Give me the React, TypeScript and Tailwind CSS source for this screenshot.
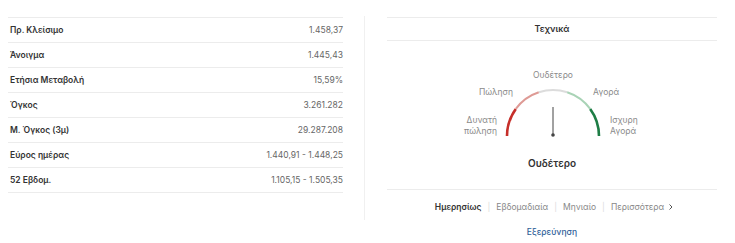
import React from 'react';

const rows: [string, string][] = [
  ['Πρ. Κλείσιμο', '1.458,37'],
  ['Άνοιγμα', '1.445,43'],
  ['Ετήσια Μεταβολή', '15,59%'],
  ['Όγκος', '3.261.282'],
  ['Μ. Όγκος (3μ)', '29.287.208'],
  ['Εύρος ημέρας', '1.440,91 - 1.448,25'],
  ['52 Εβδομ.', '1.105,15 - 1.505,35'],
];

// gauge geometry (svg coords)
const CX = 166;
const CY = 95;
const R = 46;

function arcPath(fromDeg: number, toDeg: number) {
  const p = (d: number) => {
    const a = (d * Math.PI) / 180;
    return [CX + R * Math.cos(a), CY - R * Math.sin(a)];
  };
  const [x1, y1] = p(fromDeg);
  const [x2, y2] = p(toDeg);
  return `M ${x1.toFixed(2)} ${y1.toFixed(2)} A ${R} ${R} 0 0 1 ${x2.toFixed(2)} ${y2.toFixed(2)}`;
}

const segments = [
  { from: 180, to: 144, color: '#c62f2a', w: 2.6 },
  { from: 144, to: 108, color: '#de9a95', w: 2 },
  { from: 108, to: 72, color: '#dcdcdc', w: 2 },
  { from: 72, to: 36, color: '#a9d3b6', w: 2 },
  { from: 36, to: 0, color: '#1e7d45', w: 2.6 },
];

function Gauge() {
  return (
    <svg width="330" height="104" viewBox="0 0 330 104" className="block">
      <g fontFamily="Inter, 'Noto Sans', sans-serif" fontSize="8.5" fill="#8a8a8a">
        <text x={CX} y={37} textAnchor="middle">Ουδέτερο</text>
        <text x={126} y={54} textAnchor="end">Πώληση</text>
        <text x={206} y={54}>Αγορά</text>
        <text x={110} y={82} textAnchor="end">Δυνατή</text>
        <text x={110} y={93} textAnchor="end">πώληση</text>
        <text x={223} y={82}>Ισχυρη</text>
        <text x={223} y={93}>Αγορά</text>
      </g>
      {segments.map((s) => (
        <path key={s.from} d={arcPath(s.from, s.to)} stroke={s.color} strokeWidth={s.w} fill="none" />
      ))}
      <line x1={CX} y1={66} x2={CX} y2={94} stroke="#444" strokeWidth="1" />
      <circle cx={CX} cy={94} r="1.8" fill="#444" />
    </svg>
  );
}

export default function App() {
  return (
    <div
      className="w-[735px] h-[243px] bg-white flex overflow-hidden"
      style={{ fontFamily: "Inter, 'Noto Sans', sans-serif" }}
    >
      {/* key stats table */}
      <div className="ml-2 mt-[17px] w-[335px] border-t border-[#ececec]">
        {rows.map(([label, value]) => (
          <div key={label} className="h-[25px] flex items-center justify-between border-b border-[#ececec] pl-[2px]">
            <span className="text-[8.5px] font-semibold text-[#333]">{label}</span>
            <span className="text-[8.5px] text-[#666]">{value}</span>
          </div>
        ))}
      </div>

      <div className="ml-[21px] mt-[16px] w-px h-[204px] bg-[#f0f0f0]" />

      {/* technicals */}
      <div className="ml-[22px] mt-[17px] w-[330px] flex flex-col">
        <div className="h-[24px] flex items-center justify-center border-t border-b border-[#ececec] text-[9px] font-semibold text-[#333]">
          Τεχνικά
        </div>
        <Gauge />
        <div className="h-[45px] text-center text-[10px] font-semibold text-[#333] pt-[11px] border-b border-[#ececec]">
          Ουδέτερο
        </div>
        <div className="flex items-center justify-center h-[34px] text-[8.5px] text-[#888] pl-[6px]">
          <span className="font-semibold text-[#333]">Ημερησίως</span>
          <span className="mx-[6px] text-[#dcdcdc]">|</span>
          <span>Εβδομαδιαία</span>
          <span className="mx-[6px] text-[#dcdcdc]">|</span>
          <span>Μηνιαίο</span>
          <span className="mx-[6px] text-[#dcdcdc]">|</span>
          <span>Περισσότερα</span>
          <svg width="8" height="8" viewBox="0 0 8 8" className="ml-[3px]">
            <path d="M2.5 1.5 L5 4 L2.5 6.5" stroke="#555" strokeWidth="1" fill="none" />
          </svg>
        </div>
        <div className="text-center text-[8.5px] leading-[14px] mt-[1px] font-medium text-[#2f6199]">Εξερεύνηση</div>
      </div>
    </div>
  );
}
